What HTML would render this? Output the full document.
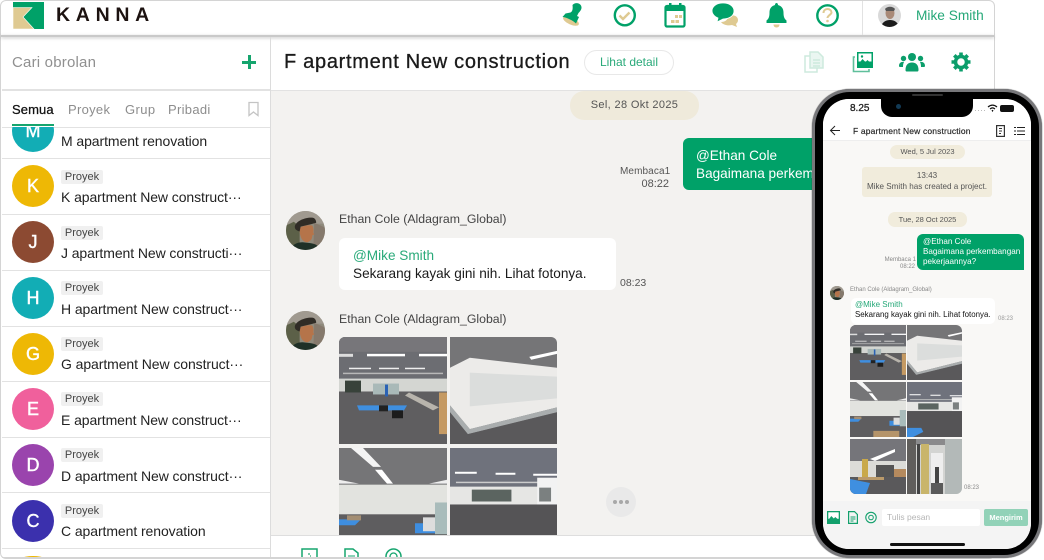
<!DOCTYPE html>
<html style="overflow:hidden;height:560px"><head><meta charset="utf-8"><style>
html,body{margin:0;padding:0;background:#fff}
body{width:1044px;height:560px;position:relative;overflow:hidden;font-family:"Liberation Sans","Noto Sans CJK JP",sans-serif;color:#222}
#root{position:absolute;left:0;top:0;width:1044px;height:560px;overflow:hidden}
.a{position:absolute;white-space:nowrap}
.av{position:absolute;left:12px;width:42px;height:42px;border-radius:50%;color:#fff;font-size:18px;line-height:42px;text-align:center;-webkit-text-stroke:.4px #fff}
.tag{position:absolute;left:61px;width:42px;height:14px;background:#f0f0f0;border-radius:2px;font-size:11px;line-height:14px;text-align:center;color:#444}
.tt{position:absolute;left:61px;font-size:14px;line-height:18px;white-space:nowrap;color:#222;letter-spacing:-.08px}
.ln{position:absolute;left:2px;width:268px;height:1px;background:#e2e2e2}
svg{position:absolute;overflow:hidden}
</style></head><body><div id="root">
<svg width="0" height="0" style="position:absolute"><defs>
<symbol id="p1" viewBox="0 0 108 108" preserveAspectRatio="none"><rect width="108" height="108" fill="#5f5e60"/><rect width="108" height="43" fill="#6c6d72"/><rect width="108" height="15" fill="#77767a"/><rect x="28" y="17" width="38" height="2.500" fill="#fff"/><rect x="80" y="17" width="28" height="2.500" fill="#fff"/><rect x="0" y="17" width="14" height="3" fill="#ddd"/><rect x="10" y="31" width="22" height="1.500" fill="#eee"/><rect x="40" y="31" width="20" height="1.500" fill="#eee"/><rect x="66" y="31" width="20" height="1.500" fill="#eee"/><rect x="4" y="36" width="100" height="1.500" fill="#b8b8b8"/><rect y="42" width="108" height="13" fill="#d4d6d2"/><rect x="34" y="47" width="26" height="11" fill="#a9b9b8"/><rect x="46" y="48" width="3" height="12" fill="#2a62b5"/><rect x="6" y="44" width="16" height="12" fill="#38423a"/><path d="M18 69h50l-3 5H20z" fill="#3f8fe0"/><rect x="40" y="69" width="9" height="6" fill="#222"/><rect x="53" y="74" width="11" height="8" fill="#1c1c1c"/><path d="M70 56l30 15-6 3-28-15z" fill="#b8b4ac"/><rect x="100" y="56" width="8" height="42" fill="#c59a63"/></symbol>
<symbol id="p2" viewBox="0 0 108 108" preserveAspectRatio="none"><rect width="108" height="108" fill="#757577"/><path d="M80 20l28-6v3l-26 6z" fill="#fff"/><path d="M0 31L20 21 108 31V71L20 93 0 69z" fill="#ecebe9"/><path d="M20 36L108 40V62L20 70z" fill="#dbdddc"/><path d="M0 69L20 93 108 71V76L18 98 0 76z" fill="#a9adae"/><path d="M0 76L18 98 108 76V108H0z" fill="#5a595b"/></symbol>
<symbol id="p3" viewBox="0 0 108 108" preserveAspectRatio="none"><rect width="108" height="108" fill="#757577"/><path d="M12 0h12l18 19h-8z" fill="#f4f4f4"/><path d="M36 22h7l11 14h-6z" fill="#fff"/><path d="M0 32l20 4H0zM90 36l18-4v4z" fill="#eee"/><rect y="37" width="108" height="30" fill="#e2e3df"/><rect y="67" width="108" height="41" fill="#5e5d5f"/><path d="M0 72h22l-6 6H0zM76 76h20v10H76z" fill="#3e8ee0"/><rect x="8" y="68" width="14" height="5" fill="#a38e73"/><rect x="96" y="55" width="12" height="32" fill="#a9bcbb"/><rect x="84" y="70" width="12" height="14" fill="#ddd"/><rect x="45" y="96" width="50" height="12" fill="#b5946a"/></symbol>
<symbol id="p4" viewBox="0 0 108 108" preserveAspectRatio="none"><rect width="108" height="108" fill="#6f727c"/><rect x="5" y="24" width="22" height="2" fill="#fff"/><rect x="46" y="25" width="20" height="2" fill="#fff"/><rect x="84" y="26" width="24" height="2" fill="#fff"/><rect x="6" y="34" width="90" height="1.500" fill="#ccc"/><rect y="39" width="108" height="19" fill="#e6e6e4"/><rect x="22" y="42" width="40" height="12" fill="#5b6460"/><rect x="88" y="30" width="20" height="30" fill="#f2f2f2"/><rect x="90" y="40" width="12" height="14" fill="#7b8080"/><rect y="57" width="108" height="51" fill="#555456"/><path d="M0 90l28 0 4 8-20 10H0z" fill="#3f8fe0"/></symbol>
<symbol id="ph" viewBox="0 0 40 40"><rect width="40" height="40" fill="#8f8a7c"/><rect width="40" height="13" fill="#a09a90"/><path d="M0 15l8-4 6 5v24H0z" fill="#5c6048"/><path d="M29 12l11 5v23H28z" fill="#85796c"/><path d="M14 17c4-2 10-3 13-2 1.500 3 1.500 5 1 7l1 2-2 1c0 4-2 6-5 7-4 0-6-3-7-6-1-3-1-6-1-9z" fill="#b5744a"/><path d="M9 16c1-6 12-10 19-9 2 .5 3 3 3 5l-5 1.500-11 2.500-1 5c-3-1-5-2-5-5z" fill="#302c26"/><path d="M4 40c2-6 8-8 13-8l8 1c6 1 9 3 10 7z" fill="#1f3027"/></symbol>
</defs></svg>

<!-- window -->
<div class="a" style="left:0;top:0;width:993px;height:557px;border:1px solid #d4d4d4;border-radius:6px;background:#fff"></div>
<div class="a" style="left:271px;top:91px;width:723px;height:444px;background:#f3f2f0"></div>
<div class="a" style="left:1px;top:35px;width:993px;height:2px;background:#c9c9c9;box-shadow:0 1px 3px rgba(0,0,0,.25)"></div>
<div class="a" style="left:270px;top:37px;width:1px;height:521px;background:#dcdcdc"></div>
<div class="a" style="left:271px;top:90px;width:723px;height:1px;background:#e2e2e2"></div>
<div class="a" style="left:2px;top:89px;width:268px;height:2px;background:#e2e2e2"></div>
<div class="a" style="left:271px;top:535px;width:723px;height:1px;background:#dedede"></div>
<div class="a" style="left:862px;top:1px;width:1px;height:34px;background:#e2e2e2"></div>

<!-- logo -->
<svg style="left:13px;top:2px" width="31" height="27" viewBox="0 0 31 27"><rect width="31" height="27" fill="#00a168"/><path d="M0 5.500H19L10 15 21 27H0z" fill="#dfca92" stroke="#fff" stroke-width=".6"/></svg>
<div class="a" style="left:56px;top:4px;font-size:19.500px;font-weight:700;letter-spacing:5.700px;line-height:23px;color:#1c1210">KANNA</div>

<!-- header icons -->
<svg style="left:560px;top:2px" width="26" height="26" viewBox="0 0 26 26"><ellipse cx="11" cy="19" rx="8.500" ry="3.500" transform="rotate(24 11 19)" fill="#dfca92"/><path d="M12.500 3c2-2.800 7-2.500 8.500.5s-.5 5.500-2.500 7.500l-1.500 3 2 1-3 6.500c-3-3-9-6-13.500-6.500l3-3.500 5-1c2-1 2.500-3.500 2-7.500z" fill="#00a168"/></svg>
<svg style="left:612px;top:3px" width="25" height="25" viewBox="0 0 25 25"><circle cx="12.800" cy="12.300" r="10" fill="none" stroke="#00a168" stroke-width="2.400"/><path d="M7.500 12.500l3.500 3.500 6.500-6.500" fill="none" stroke="#dfca92" stroke-width="2.400"/></svg>
<svg style="left:663px;top:2px" width="24" height="26" viewBox="0 0 24 26"><rect x="2.500" y="4" width="19" height="20.500" rx="1.500" fill="none" stroke="#00a168" stroke-width="2.200"/><rect x="2.500" y="4" width="19" height="5" fill="#00a168"/><rect x="6" y="1" width="2.500" height="5" fill="#00a168"/><rect x="16" y="1" width="2.500" height="5" fill="#00a168"/><g fill="#dfca92"><rect x="12" y="13" width="3" height="3"/><rect x="16" y="13" width="3" height="3"/><rect x="8" y="18" width="3.500" height="3"/><rect x="12.500" y="18" width="3.500" height="3"/></g></svg>
<svg style="left:712px;top:3px" width="27" height="24" viewBox="0 0 27 24"><path d="M16 13c5-2 10 0 10 4 0 2-1 3-2 4l1 3-5-2c-4 1-9 0-11-3 4 0 7-2 7-6z" fill="#dfca92"/><path d="M11 0c6 0 11 3 11 8s-5 8-11 8l-6 3 1-4C3 14 0 11 0 8c0-5 5-8 11-8z" fill="#00a168" stroke="#fff" stroke-width=".8"/></svg>
<svg style="left:766px;top:3px" width="21" height="25" viewBox="0 0 21 25"><path d="M10.500 0c1 0 1.500 1 1.500 2 3.500 1 5.500 3.500 5.500 7.500 0 4.500 1 6.500 3 8v2.500H.5v-2.500c2-1.500 3-3.500 3-8C3.500 5.500 5.500 3 9 2c0-1 .5-2 1.500-2z" fill="#00a168"/><path d="M7.500 21.500h6c0 1.500-1 3-3 3s-3-1.500-3-3z" fill="#dfca92"/></svg>
<svg style="left:815px;top:3px" width="25" height="25" viewBox="0 0 25 25"><circle cx="12.500" cy="12.500" r="10.200" fill="none" stroke="#00a168" stroke-width="2.400"/><path d="M8.500 10c0-2.500 1.800-4 4-4s4 1.500 4 3.500-4 3-4 5.500" fill="none" stroke="#dfca92" stroke-width="2"/><circle cx="12.500" cy="18" r="1.300" fill="#dfca92"/></svg>
<svg style="left:878px;top:4px" width="23" height="23" viewBox="0 0 23 23"><defs><clipPath id="cu"><circle cx="11.500" cy="11.500" r="11.500"/></clipPath></defs><g clip-path="url(#cu)"><rect width="23" height="23" fill="#d9d9d9"/><ellipse cx="12" cy="9" rx="4.500" ry="6" fill="#a98a78"/><path d="M7 5c2-3 8-3 10 0l-1 2H8z" fill="#555"/><path d="M3 23c1-5 5-7 9-7s8 2 9 7z" fill="#1b1b1b"/></g></svg>
<div class="a" style="left:916px;top:7px;font-size:13.700px;line-height:18px;color:#25a878">Mike Smith</div>

<!-- sidebar top -->
<div class="a" style="left:12px;top:54px;font-size:15px;line-height:18px;color:#909090;letter-spacing:.2px">Cari obrolan</div>
<div class="a" style="left:242px;top:61px;width:14px;height:3px;background:#16a56e"></div>
<div class="a" style="left:247.500px;top:55px;width:3px;height:14px;background:#16a56e"></div>
<div class="a" style="left:12px;top:102px;font-size:13px;line-height:16px;color:#111;letter-spacing:.1px;-webkit-text-stroke:.25px #111">Semua</div>
<div class="a" style="left:68px;top:102px;font-size:13px;line-height:16px;color:#8d8d8d;letter-spacing:.3px">Proyek</div>
<div class="a" style="left:125px;top:102px;font-size:13px;line-height:16px;color:#8d8d8d;letter-spacing:.4px">Grup</div>
<div class="a" style="left:168px;top:102px;font-size:13px;line-height:16px;color:#8d8d8d;letter-spacing:.3px">Pribadi</div>
<svg style="left:247px;top:101px" width="13" height="16" viewBox="0 0 13 16"><path d="M2 1.500h9v13L6.500 11 2 14.500z" fill="none" stroke="#c4c4c4" stroke-width="1.300"/></svg>
<div class="a" style="left:2px;top:127px;width:268px;height:1px;background:#e2e2e2"></div>

<!-- list -->
<div class="a" style="left:1px;top:127px;width:269px;height:431px;overflow:hidden">
  <div class="a" style="left:11px;top:-17px;width:42px;height:42px;border-radius:50%;background:#12adb5;color:#fff;font-size:18px;line-height:42px;text-align:center;-webkit-text-stroke:.4px #fff">M</div>
</div>
<div class="a" style="left:12px;top:124px;width:42px;height:2px;background:#16a56e"></div>
<div class="tt" style="top:132px">M apartment renovation</div>
<div class="ln" style="top:158px"></div>

<div class="av" style="top:165px;background:#eeb805">K</div><div class="tag" style="top:170px">Proyek</div><div class="tt" style="top:188px">K apartment New construct···</div><div class="ln" style="top:214px"></div>
<div class="av" style="top:221px;background:#8c4a32">J</div><div class="tag" style="top:226px">Proyek</div><div class="tt" style="top:244px">J apartment New constructi···</div><div class="ln" style="top:270px"></div>
<div class="av" style="top:277px;background:#12adb5">H</div><div class="tag" style="top:281px">Proyek</div><div class="tt" style="top:300px">H apartment New construct···</div><div class="ln" style="top:326px"></div>
<div class="av" style="top:333px;background:#eeb805">G</div><div class="tag" style="top:337px">Proyek</div><div class="tt" style="top:355px">G apartment New construct···</div><div class="ln" style="top:381px"></div>
<div class="av" style="top:388px;background:#f0609c">E</div><div class="tag" style="top:392px">Proyek</div><div class="tt" style="top:411px">E apartment New construct···</div><div class="ln" style="top:437px"></div>
<div class="av" style="top:444px;background:#9a44ad">D</div><div class="tag" style="top:448px">Proyek</div><div class="tt" style="top:467px">D apartment New construct···</div><div class="ln" style="top:492px"></div>
<div class="av" style="top:500px;background:#3b30ad">C</div><div class="tag" style="top:504px">Proyek</div><div class="tt" style="top:522px">C apartment renovation</div><div class="ln" style="top:548px"></div>
<div class="a" style="left:23px;top:556px;width:20px;height:2px;border-radius:10px 10px 0 0/2px 2px 0 0;background:#eeb805"></div>

<!-- chat header -->
<div class="a" style="left:284px;top:50px;font-size:20px;line-height:25px;color:#1a1a1a;letter-spacing:.7px;-webkit-text-stroke:.3px #1a1a1a">F apartment New construction</div>
<div class="a" style="left:584px;top:50px;width:88px;height:23px;border:1px solid #e8e8e8;border-radius:13px;text-align:center;font-size:12px;line-height:23px;color:#2aaa7a">Lihat detail</div>
<svg style="left:803px;top:51px" width="22" height="22" viewBox="0 0 22 22"><g fill="none" stroke="#cdeadd" stroke-width="1.500"><path d="M7 1h8l5 5v11H7z" fill="#eaf6f1"/><path d="M7 5H2v16h12v-4"/><path d="M10 9h7M10 12h7M10 15h7"/></g></svg>
<svg style="left:852px;top:51px" width="22" height="22" viewBox="0 0 22 22"><path d="M3 6H1.500v14.500H17V18" fill="none" stroke="#5fbf9b" stroke-width="1.600"/><rect x="5" y="1" width="16" height="16" fill="#00a168"/><rect x="6.500" y="2.500" width="13" height="8" fill="#fff"/><path d="M6.500 13l4-5 3 3 2-2 4 4v2h-13z" fill="#00a168"/><circle cx="10" cy="5.500" r="1.200" fill="#00a168"/></svg>
<svg style="left:899px;top:52px" width="26" height="20" viewBox="0 0 26 20"><g fill="#0b9e6b"><circle cx="13" cy="5" r="4"/><circle cx="4.500" cy="6.500" r="2.700"/><circle cx="21.500" cy="6.500" r="2.700"/><path d="M6.500 18c0-5 2.500-7.500 6.500-7.500s6.500 2.500 6.500 7.500c0 1-.5 1.500-1 1.500h-11c-.5 0-1-.5-1-1.500z"/><path d="M0 14c0-3 2-4.500 5-4 -.8 1.500-1 3-1 5H1c-.6 0-1-.4-1-1zM26 14c0-3-2-4.500-5-4 .8 1.500 1 3 1 5h3c.6 0 1-.4 1-1z"/></g></svg>
<svg style="left:951px;top:52px" width="20" height="20" viewBox="0 0 20 20"><circle cx="10" cy="10" r="5.500" fill="none" stroke="#0b9e6b" stroke-width="3.500"/><g stroke="#0b9e6b" stroke-width="3.600"><path d="M10 .5v3M10 16.500v3M.5 10h3M16.500 10h3M3.300 3.300l2.100 2.100M14.600 14.600l2.100 2.100M3.300 16.700l2.100-2.100M14.600 5.400l2.100-2.100"/></g></svg>

<!-- chat -->
<div class="a" style="left:570px;top:91px;width:129px;height:29px;background:#efeadb;border-radius:14px;text-align:center;font-size:11px;line-height:29px;color:#555;letter-spacing:.35px">Sel, 28 Okt 2025</div>
<div class="a" style="left:620px;top:166px;font-size:10px;line-height:12px;color:#555;letter-spacing:.1px">Membaca1</div>
<div class="a" style="left:632px;top:178px;width:37px;text-align:right;font-size:11px;line-height:13px;color:#555">08:22</div>
<div class="a" style="left:683px;top:138px;width:140px;height:52px;background:#00a168;border-radius:6px 0 0 6px"></div>
<div class="a" style="left:696px;top:147px;font-size:13.600px;line-height:18px;color:#fff">@Ethan Cole<br>Bagaimana perkem</div>

<svg style="left:286px;top:211px" width="39" height="39" viewBox="0 0 40 40"><defs><clipPath id="c1"><circle cx="20" cy="20" r="20"/></clipPath></defs><g clip-path="url(#c1)"><use href="#ph" width="40" height="40"/></g></svg>
<div class="a" style="left:339px;top:211px;font-size:12.300px;line-height:16px;color:#444">Ethan Cole (Aldagram_Global)</div>
<div class="a" style="left:339px;top:238px;width:277px;height:52px;background:#fff;border-radius:6px"></div>
<div class="a" style="left:353px;top:247px;font-size:13.600px;line-height:18px;color:#2aaa7a">@Mike Smith<br><span style="color:#1a1a1a">Sekarang kayak gini nih. Lihat fotonya.</span></div>
<div class="a" style="left:620px;top:277px;font-size:10.500px;line-height:13px;color:#555">08:23</div>

<svg style="left:286px;top:311px" width="39" height="39" viewBox="0 0 40 40"><g clip-path="url(#c1)"><use href="#ph" width="40" height="40"/></g></svg>
<div class="a" style="left:339px;top:311px;font-size:12.300px;line-height:16px;color:#444">Ethan Cole (Aldagram_Global)</div>

<div class="a" style="left:339px;top:337px;width:218px;height:198px;border-radius:6px 6px 0 0;overflow:hidden">
<svg style="left:0;top:0" width="108" height="107"><use href="#p1" width="108" height="107"/></svg>
<svg style="left:111px;top:0" width="107" height="107"><use href="#p2" width="107" height="107"/></svg>
<svg style="left:0;top:111px" width="108" height="87" viewBox="0 0 108 87"><use href="#p3" width="108" height="107"/></svg>
<svg style="left:111px;top:111px" width="107" height="87" viewBox="0 0 107 87"><use href="#p4" width="107" height="107"/></svg>
</div>
<div class="a" style="left:606px;top:487px;width:30px;height:30px;border-radius:50%;background:#e9e9e9"></div>
<div class="a" style="left:613px;top:500px;width:4px;height:4px;border-radius:50%;background:#a8a8a8;box-shadow:6px 0 #a8a8a8,12px 0 #a8a8a8"></div>

<!-- bottom toolbar -->
<svg style="left:301px;top:548px" width="18" height="9" viewBox="0 0 18 9"><path d="M1 9V1h15v8" fill="none" stroke="#17a56f" stroke-width="1.500"/><path d="M7 5h2v2H7zM9 7h1v2H9z" fill="#7ccaa9"/></svg>
<svg style="left:344px;top:548px" width="15" height="9" viewBox="0 0 15 9"><path d="M1 9V1h8l5 4v4" fill="none" stroke="#17a56f" stroke-width="1.500"/><path d="M4 8h7" stroke="#17a56f"/></svg>
<svg style="left:385px;top:548px" width="17" height="9" viewBox="0 0 17 9"><circle cx="8.500" cy="8.500" r="7.500" fill="none" stroke="#17a56f" stroke-width="1.500"/><circle cx="8.500" cy="8.500" r="3.500" fill="none" stroke="#17a56f" stroke-width="1.300"/></svg>
<div class="a" style="left:2px;top:557px;width:992px;height:1px;background:#d4d4d4"></div>

<!-- phone -->
<div class="a" style="left:812px;top:89px;width:230px;height:469px;border-radius:38px;background:#77777a;box-shadow:0 0 1px #333"></div>
<div class="a" style="left:815px;top:92px;width:224px;height:463px;border-radius:35px;background:#000"></div>
<div class="a" style="left:823px;top:99px;width:208px;height:450px;border-radius:26px;background:#f9f8f6;overflow:hidden">
  <div class="a" style="left:0;top:0;width:208px;height:41px;background:#fff;border-bottom:1px solid #eee"></div>
  <div class="a" style="left:0;top:402px;width:208px;height:48px;background:#f4f4f4"></div>
</div>
<div class="a" style="left:881px;top:99px;width:92px;height:18px;background:#000;border-radius:0 0 11px 11px"></div>
<div class="a" style="left:912px;top:94px;width:31px;height:2px;background:#333;border-radius:2px"></div>
<div class="a" style="left:896px;top:104px;width:5px;height:5px;background:#123a55;border-radius:50%"></div>
<div class="a" style="left:850px;top:103px;font-size:10px;line-height:12px;color:#222;-webkit-text-stroke:.3px #222">8.25</div>
<svg style="left:974px;top:104px" width="56" height="9" viewBox="0 0 56 9"><g fill="#bbb"><rect x="1" y="6" width="1" height="1"/><rect x="4" y="6" width="1" height="1"/><rect x="7" y="6" width="1" height="1"/><rect x="10" y="6" width="1" height="1"/></g><path d="M14 3c3-2.500 6-2.500 9 0M16 5c2-1.500 3-1.500 5 0" fill="none" stroke="#111" stroke-width="1.200"/><path d="M17.500 6.500l1-.8 1 .8-1 1.500z" fill="#111"/><rect x="26" y="1" width="14" height="7" rx="2" fill="#111"/></svg>
<svg style="left:829px;top:125px" width="12" height="11" viewBox="0 0 12 11"><path d="M11 5.500H1.500M6 1L1.500 5.500 6 10" fill="none" stroke="#222" stroke-width="1"/></svg>
<div class="a" style="left:853px;top:125px;font-size:8.500px;line-height:12px;color:#222;-webkit-text-stroke:.15px #222;letter-spacing:.15px">F apartment New construction</div>
<svg style="left:996px;top:125px" width="9" height="12" viewBox="0 0 9 12"><rect x=".6" y=".6" width="7.800" height="10.800" fill="none" stroke="#333" stroke-width="1.200"/><path d="M3 3.500h3M3 6h3M3 8.500h2" stroke="#333"/></svg>
<svg style="left:1014px;top:126px" width="11" height="10" viewBox="0 0 11 10"><path d="M3 1.500h8M3 5h8M3 8.500h8M0 1.500h2M0 5h2M0 8.500h2" stroke="#222" stroke-width="1.100"/></svg>

<div class="a" style="left:890px;top:145px;width:75px;height:14px;background:#f1ecdc;border-radius:7px;text-align:center;font-size:7.500px;line-height:14px;color:#555">Wed, 5 Jul 2023</div>
<div class="a" style="left:862px;top:167px;width:130px;height:30px;background:#f1ecdc;border-radius:3px;text-align:center;font-size:8.100px;line-height:11px;color:#555;padding-top:3px;box-sizing:border-box">13:43<br>Mike Smith has created a project.</div>
<div class="a" style="left:888px;top:212px;width:79px;height:15px;background:#f1ecdc;border-radius:7px;text-align:center;font-size:7.500px;line-height:15px;color:#555">Tue, 28 Oct 2025</div>
<div class="a" style="left:884px;top:257px;width:32px;text-align:right;font-size:6px;line-height:7px;color:#888">Membaca 1</div>
<div class="a" style="left:884px;top:264px;width:31px;text-align:right;font-size:6px;line-height:7px;color:#888">08:22</div>
<div class="a" style="left:917px;top:234px;width:107px;height:36px;background:#00a168;border-radius:6px 6px 0 6px"></div>
<div class="a" style="left:923px;top:237px;font-size:8.100px;line-height:10px;color:#fff">@Ethan Cole<br>Bagaimana perkembangan<br>pekerjaannya?</div>
<svg style="left:830px;top:286px" width="14" height="14" viewBox="0 0 40 40"><g clip-path="url(#c1)"><use href="#ph" width="40" height="40"/></g></svg>
<div class="a" style="left:850px;top:286px;font-size:6px;line-height:8px;color:#888">Ethan Cole (Aldagram_Global)</div>
<div class="a" style="left:851px;top:298px;width:144px;height:26px;background:#fff;border-radius:5px"></div>
<div class="a" style="left:855px;top:300px;font-size:8px;line-height:10px;color:#25a878">@Mike Smith<br><span style="color:#111;font-size:7.900px">Sekarang kayak gini nih. Lihat fotonya.</span></div>
<div class="a" style="left:998px;top:315px;font-size:6px;line-height:8px;color:#999">08:23</div>

<div class="a" style="left:850px;top:325px;width:112px;height:169px;border-radius:6px;overflow:hidden">
<svg style="left:0;top:0" width="56" height="55"><use href="#p1" width="56" height="55"/></svg>
<svg style="left:57px;top:0" width="55" height="55"><use href="#p2" width="55" height="55"/></svg>
<svg style="left:0;top:57px" width="56" height="55"><use href="#p3" width="56" height="55"/></svg>
<svg style="left:57px;top:57px" width="55" height="55"><use href="#p4" width="55" height="55"/></svg>
<svg style="left:0;top:114px" width="56" height="55" viewBox="0 0 56 55" preserveAspectRatio="none"><rect width="56" height="55" fill="#75757a"/><path d="M20 20l25-10v3L25 22z" fill="#fff"/><rect y="22" width="56" height="20" fill="#dcdcd8"/><rect x="12" y="20" width="6" height="18" fill="#c9a94a"/><rect x="26" y="26" width="18" height="12" fill="#555"/><rect x="44" y="30" width="12" height="12" fill="#b58a5e"/><rect y="38" width="56" height="17" fill="#5a595b"/><path d="M0 40l20 4-4 11H0z" fill="#3f8fe0"/><rect x="8" y="38" width="26" height="3" fill="#ba9a6a"/></svg>
<svg style="left:57px;top:114px" width="55" height="55" viewBox="0 0 55 55" preserveAspectRatio="none"><rect width="55" height="55" fill="#d3d4d2"/><rect width="55" height="6" fill="#8a8a8c"/><rect x="0" y="0" width="9" height="55" fill="#605e5c"/><rect x="10" y="5" width="3" height="50" fill="#444"/><rect x="14" y="5" width="8" height="50" fill="#c9b56a"/><rect x="24" y="14" width="12" height="38" fill="#eee"/><rect x="28" y="28" width="4" height="27" fill="#444"/><rect x="38" y="0" width="17" height="55" fill="#b3b9b8"/><rect x="24" y="44" width="12" height="11" fill="#5a5a5a"/></svg>
</div>
<div class="a" style="left:964px;top:484px;font-size:6px;line-height:8px;color:#888">08:23</div>

<svg style="left:827px;top:511px" width="13" height="13" viewBox="0 0 13 13"><rect width="13" height="13" fill="#12a06c"/><rect x="1.300" y="1.300" width="10.400" height="6.500" fill="#fff"/><path d="M1.300 9l3-4 2.500 2.500 1.500-1.500 3.400 3v2H1.300z" fill="#12a06c"/></svg>
<svg style="left:848px;top:511px" width="10" height="13" viewBox="0 0 10 13"><path d="M.6.600H6.500L9.400 3.500V12.400H.6z" fill="none" stroke="#12a06c" stroke-width="1.200"/><path d="M2.500 6h5M2.500 8h5M2.500 10h3" stroke="#12a06c"/></svg>
<svg style="left:865px;top:511px" width="12" height="13" viewBox="0 0 12 13"><circle cx="6" cy="6.500" r="5.200" fill="none" stroke="#12a06c" stroke-width="1.100"/><circle cx="6" cy="6.500" r="2.300" fill="none" stroke="#12a06c"/></svg>
<div class="a" style="left:882px;top:509px;width:98px;height:17px;background:#fff;border-radius:2px;font-size:8.500px;line-height:17px;color:#b5b5b5;text-indent:5px">Tulis pesan</div>
<div class="a" style="left:984px;top:509px;width:44px;height:17px;background:#92d2b8;border-radius:2px;text-align:center;font-size:7.500px;line-height:17px;font-weight:700;color:#fff">Mengirim</div>
<div class="a" style="left:890px;top:543px;width:75px;height:2.500px;background:#111;border-radius:2px"></div>
</div></body></html>
